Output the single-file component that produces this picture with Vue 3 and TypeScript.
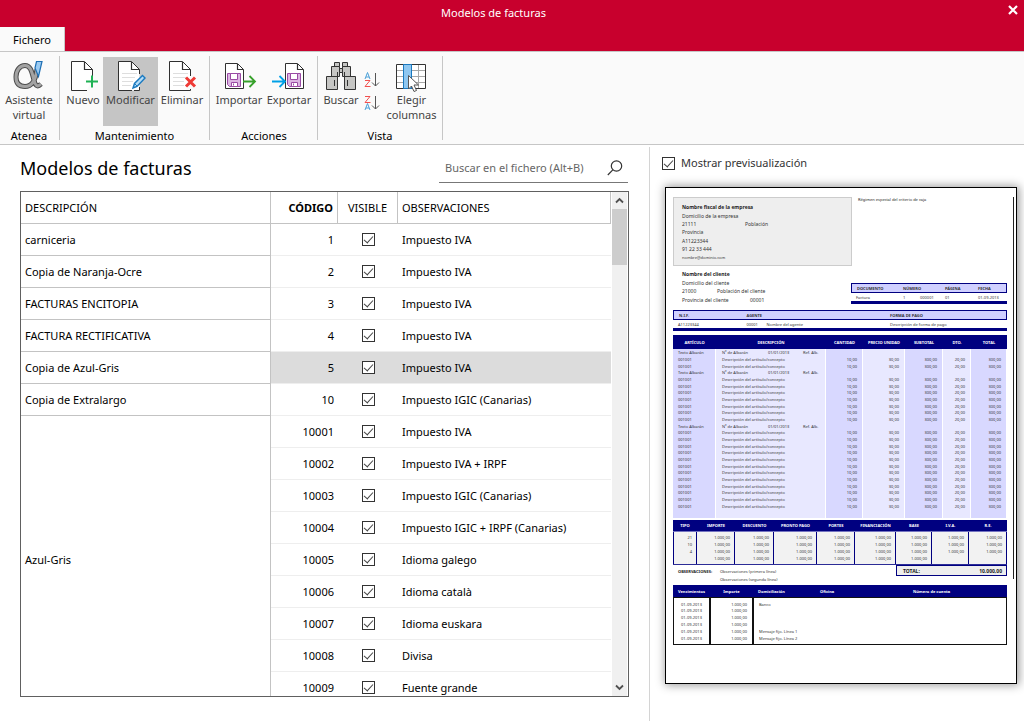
<script setup lang="ts">
import { ref } from 'vue'

interface Model {
  code: number
  notes: string
  name?: string
  span?: number
  visible: boolean
}

const models = ref<Model[]>([
  { name: 'carniceria', code: 1, notes: 'Impuesto IVA', visible: true },
  { name: 'Copia de Naranja-Ocre', code: 2, notes: 'Impuesto IVA', visible: true },
  { name: 'FACTURAS ENCITOPIA', code: 3, notes: 'Impuesto IVA', visible: true },
  { name: 'FACTURA RECTIFICATIVA', code: 4, notes: 'Impuesto IVA', visible: true },
  { name: 'Copia de Azul-Gris', code: 5, notes: 'Impuesto IVA', visible: true },
  { name: 'Copia de Extralargo', code: 10, notes: 'Impuesto IGIC (Canarias)', visible: true },
  { name: 'Azul-Gris', span: 9, code: 10001, notes: 'Impuesto IVA', visible: true },
  { code: 10002, notes: 'Impuesto IVA + IRPF', visible: true },
  { code: 10003, notes: 'Impuesto IGIC (Canarias)', visible: true },
  { code: 10004, notes: 'Impuesto IGIC + IRPF (Canarias)', visible: true },
  { code: 10005, notes: 'Idioma galego', visible: true },
  { code: 10006, notes: 'Idioma català', visible: true },
  { code: 10007, notes: 'Idioma euskara', visible: true },
  { code: 10008, notes: 'Divisa', visible: true },
  { code: 10009, notes: 'Fuente grande', visible: true },
])
const selected = ref(5)
const search = ref('')
const showPreview = ref(true)

const widths = (parts: number[]): string[] => {
  const total = parts.reduce((a, b) => a + b, 0)
  return parts.map((p) => `${(p / total) * 100}%`)
}

const lineCols = widths([43, 110, 37, 42, 38, 28, 36])
const lineHeads = ['ARTÍCULO', 'DESCRIPCIÓN', 'CANTIDAD', 'PRECIO UNIDAD', 'SUBTOTAL', 'DTO.', 'TOTAL']
const lineValues = ['10,00', '30,00', '300,00', '20,00', '300,00']
const lines: boolean[] = [2, 7, 12].flatMap((n) => [true, ...Array<boolean>(n).fill(false)])

const taxCols = widths([24, 38, 39, 43, 38, 41, 36, 37, 38])
const taxHeads = ['TIPO', 'IMPORTE', 'DESCUENTO', 'PRONTO PAGO', 'PORTES', 'FINANCIACIÓN', 'BASE', 'I.V.A.', 'R.E.']
const taxRows = ['21', '10', '4', ''].map((t) => [t, ...taxHeads.slice(1).map((_, i) => (t || i < 6 ? '1.000,00' : ''))])

const dueCols = widths([37, 43, 254])
const dueNotes = ['Banco', '', '', '', 'Mensaje fijo. Línea 1', 'Mensaje fijo. Línea 2']
</script>

<template>
  <div class="window">
    <header class="titlebar">
      <div class="caption">
        <span class="caption-text">Modelos de facturas</span>
        <button class="close" aria-label="Cerrar">
          <svg width="10" height="10" viewBox="0 0 10 10"><path d="M1 1L9 9M9 1L1 9" stroke="#fff" stroke-width="2.2" /></svg>
        </button>
      </div>
      <button class="tab">Fichero</button>
    </header>

    <nav class="ribbon">
      <section class="group">
        <div class="tools">
          <button class="tool w56">
            <svg width="36" height="32" viewBox="0 0 36 32" fill="none">
              <path d="M26 9C25 18 22 26.500 14 26.500C8 26.500 5 23 5 17C5 10 9 5.500 14 5.500C20 5.500 21 13 23 20C24 25 26 28 30 24" stroke="#4c4c4c" stroke-width="5" />
              <path d="M26 9C25 18 22 26.500 14 26.500C8 26.500 5 23 5 17C5 10 9 5.500 14 5.500C20 5.500 21 13 23 20C24 25 26 28 30 24" stroke="#a3a3a3" stroke-width="3" />
              <path d="M25.500 1.500H31L27.500 16.500L24 8Z" fill="#9bcbf2" stroke="#1f6fb4" stroke-width="1.200" />
            </svg>
            <span>Asistente<br />virtual</span>
          </button>
        </div>
        <h2>Atenea</h2>
      </section>

      <section class="group">
        <div class="tools">
          <button class="tool w40">
            <svg width="36" height="32" viewBox="0 0 36 32" fill="none">
              <path d="M22 30.500H6.500V1.500H19.500L27.500 9.500V17" fill="#fff" stroke="#303030" />
              <path d="M19.500 2V9.500H27.500" stroke="#303030" stroke-width="1.200" />
              <path d="M27 15.500V27.500M21 21.500H33" stroke="#1fb254" stroke-width="2" />
            </svg>
            <span>Nuevo</span>
          </button>
          <button class="tool w55 active">
            <svg width="36" height="32" viewBox="0 0 36 32" fill="none">
              <path d="M5.500 30.500V1.500H18.500L26.500 9.500V30.500Z" fill="#fff" />
              <path d="M19 30.500H5.500V1.500H18.500L26.500 9.500V14M26.500 27V30.500H21" stroke="#303030" />
              <path d="M18.500 2V9.500H26.500" stroke="#303030" stroke-width="1.200" />
              <path d="M9 13.500H24M9 17.500H22M9 21.500H20M9 25.500H18" stroke="#dedede" />
              <path d="M20 28L21.500 23.500L29.500 15.500L32 18L24 26.500Z" fill="#b5dcf7" stroke="#1979c0" stroke-width="1.400" />
              <path d="M22 24L24 26" stroke="#1979c0" />
            </svg>
            <span>Modificar</span>
          </button>
          <button class="tool w48">
            <svg width="36" height="32" viewBox="0 0 36 32" fill="none">
              <path d="M22 30.500H5.500V1.500H18.500L26.500 9.500V16" fill="#fff" stroke="#303030" />
              <path d="M26.500 29V30.500H22" stroke="#303030" />
              <path d="M18.500 2V9.500H26.500" stroke="#303030" stroke-width="1.200" />
              <path d="M9 13.500H24M9 17.500H22M9 21.500H20M9 25.500H20" stroke="#dedede" />
              <path d="M22 17.500L31 26.500M31 17.500L22 26.500" stroke="#ee3a35" stroke-width="3" />
            </svg>
            <span>Eliminar</span>
          </button>
        </div>
        <h2>Mantenimiento</h2>
      </section>

      <section class="group wide">
        <div class="tools">
          <button class="tool w50">
            <svg width="36" height="32" viewBox="0 0 36 32" fill="none">
              <path d="M4.500 28.500V3.500H16.500L22.500 9.500V28.500Z" fill="#fff" stroke="#303030" />
              <path d="M16.500 4V9.500H22.500" stroke="#303030" stroke-width="1.200" />
              <path d="M6.500 13.500H19.500V26.500H8.500L6.500 24.500Z" fill="#dcb6e2" stroke="#9a4aa5" />
              <path d="M9.500 13.500H16.500V19.500H9.500Z" fill="#fff" stroke="#9a4aa5" />
              <path d="M10.500 22.500H16.500V26.500H10.500Z" fill="#fff" stroke="#9a4aa5" />
              <path d="M12.500 23.500V25.500" stroke="#9a4aa5" />
              <path d="M22 21.500H33M28.500 16L34 21.500L28.500 27" stroke="#37a12b" stroke-width="1.800" />
            </svg>
            <span>Importar</span>
          </button>
          <button class="tool w50">
            <svg width="36" height="32" viewBox="0 0 36 32" fill="none">
              <path d="M14.500 28.500V3.500H26.500L32.500 9.500V28.500Z" fill="#fff" stroke="#303030" />
              <path d="M26.500 4V9.500H32.500" stroke="#303030" stroke-width="1.200" />
              <path d="M16.500 13.500H29.500V26.500H18.500L16.500 24.500Z" fill="#dcb6e2" stroke="#9a4aa5" />
              <path d="M19.500 13.500H26.500V19.500H19.500Z" fill="#fff" stroke="#9a4aa5" />
              <path d="M20.500 22.500H26.500V26.500H20.500Z" fill="#fff" stroke="#9a4aa5" />
              <path d="M22.500 23.500V25.500" stroke="#9a4aa5" />
              <path d="M1 21.500H13M8.500 16L14 21.500L8.500 27" stroke="#00a0e6" stroke-width="1.800" />
            </svg>
            <span>Exportar</span>
          </button>
        </div>
        <h2>Acciones</h2>
      </section>

      <section class="group">
        <div class="tools">
          <button class="tool w40">
            <svg width="36" height="32" viewBox="0 0 36 32" fill="none">
              <g fill="#c6c6c4" stroke="#333">
                <path d="M11.500 2.500H16.500V6.500H11.500ZM19.500 2.500H24.500V6.500H19.500Z" />
                <path d="M8.500 6.500H16.500V16.500H8.500ZM19.500 6.500H27.500V16.500H19.500Z" />
                <path d="M16.500 8.500H19.500V12.500H16.500Z" />
                <path d="M3.500 16.500H14.500V29.500H3.500ZM21.500 16.500H32.500V29.500H21.500Z" />
                <path d="M14.500 16.500V12M21.500 16.500V12M11.500 20V26M24.500 20V26" />
              </g>
            </svg>
            <span>Buscar</span>
          </button>
          <div class="sorts">
            <button class="sort" aria-label="Orden ascendente">
              <svg width="18" height="18" viewBox="0 0 18 18" fill="none">
                <path d="M2 8L4.500 1.500L7 8M3 6H6" stroke="#4aa0d8" />
                <path d="M2 9.500H7L2 15.500H7.500" stroke="#f2504f" />
                <path d="M12.500 2V15M9 11.500L12.500 15L16 11.500" stroke="#555" />
              </svg>
            </button>
            <button class="sort" aria-label="Orden descendente">
              <svg width="18" height="18" viewBox="0 0 18 18" fill="none">
                <path d="M2 2.500H7L2 8.500H7.500" stroke="#f2504f" />
                <path d="M2 16L4.500 9.500L7 16M3 14H6" stroke="#4aa0d8" />
                <path d="M12.500 2V15M9 11.500L12.500 15L16 11.500" stroke="#555" />
              </svg>
            </button>
          </div>
          <button class="tool w55">
            <svg width="36" height="32" viewBox="0 0 36 32" fill="none">
              <path d="M2.500 4.500H31.500V28.500H2.500Z" fill="#fff" />
              <path d="M3 10.500H31M3 16.500H31M3 22.500H31M17.500 5V28M24.500 5V28" stroke="#a8a8a8" />
              <path d="M2.500 4.500H31.500V28.500H2.500Z" stroke="#333" />
              <path d="M9.500 4.500H17.500V28.500H9.500Z" fill="#8fc7f0" stroke="#1979c0" />
              <path d="M14.500 15.500V29L17.500 26L20 31.500L22.500 30.500L20 25H24.500Z" fill="#fff" stroke="#555" />
            </svg>
            <span>Elegir<br />columnas</span>
          </button>
        </div>
        <h2>Vista</h2>
      </section>
    </nav>

    <div class="body">
      <main class="list">
        <div class="list-head">
          <h1>Modelos de facturas</h1>
          <div class="search">
            <input v-model="search" type="text" placeholder="Buscar en el fichero (Alt+B)" aria-label="Buscar en el fichero" />
            <button class="search-btn" aria-label="Buscar">
              <svg width="16" height="16" viewBox="0 0 16 16" fill="none" stroke="#333" stroke-width="1.200"><circle cx="9.500" cy="6" r="5.200" /><path d="M5.800 9.800L0.800 15" /></svg>
            </button>
          </div>
        </div>

        <div class="grid-box">
          <table class="grid">
            <colgroup><col class="c-name" /><col class="c-code" /><col class="c-vis" /><col /></colgroup>
            <thead>
              <tr><th>DESCRIPCIÓN</th><th class="num strong">CÓDIGO</th><th class="mid">VISIBLE</th><th>OBSERVACIONES</th></tr>
            </thead>
            <tbody>
              <tr v-for="m in models" :key="m.code" :class="{ sel: m.code === selected }" @click="selected = m.code">
                <td v-if="m.name" class="name" :rowspan="m.span ?? 1">{{ m.name }}</td>
                <td class="num">{{ m.code }}</td>
                <td class="mid"><input v-model="m.visible" class="check" type="checkbox" :aria-label="`Visible ${m.code}`" /></td>
                <td>{{ m.notes }}</td>
              </tr>
            </tbody>
          </table>
          <div class="scroll">
            <button class="arrow" aria-label="Subir"><svg width="9" height="7" viewBox="0 0 9 7" fill="none"><path d="M1 5.500L4.500 2L8 5.500" stroke="#505050" stroke-width="1.800" /></svg></button>
            <div class="thumb"></div>
            <button class="arrow" aria-label="Bajar"><svg width="9" height="7" viewBox="0 0 9 7" fill="none"><path d="M1 1.500L4.500 5L8 1.500" stroke="#505050" stroke-width="1.800" /></svg></button>
          </div>
        </div>
      </main>

      <aside class="preview">
        <label class="toggle"><input v-model="showPreview" class="check" type="checkbox" />Mostrar previsualización</label>

        <article v-if="showPreview" class="page">
          <div class="top">
            <div class="company">
              <b>Nombre fiscal de la empresa</b>
              <span>Domicilio de la empresa</span>
              <span class="pair"><i>21111</i>Población</span>
              <span>Provincia</span>
              <span>A11223344</span>
              <span>91 22 33 444</span>
              <span class="small">nombre@dominio.com</span>
            </div>
            <p class="regime">Régimen especial del criterio de caja</p>
          </div>

          <div class="mid-row">
            <div class="client">
              <b>Nombre del cliente</b>
              <span>Domicilio del cliente</span>
              <span class="pair zip"><i>21000</i>Población del cliente</span>
              <span class="pair prov"><i>Provincia del cliente</i>00001</span>
            </div>
            <table class="strip doc">
              <thead><tr><th>DOCUMENTO</th><th>NÚMERO</th><th></th><th>PÁGINA</th><th>FECHA</th></tr></thead>
              <tbody><tr><td>Factura</td><td>1</td><td>000001</td><td>01</td><td>01-09-2013</td></tr></tbody>
            </table>
          </div>

          <table class="strip agent">
            <thead><tr><th>N.I.F.</th><th>AGENTE</th><th></th><th>FORMA DE PAGO</th></tr></thead>
            <tbody><tr><td>A11223344</td><td>00001</td><td>Nombre del agente</td><td>Descripción de forma de pago</td></tr></tbody>
          </table>

          <table class="lines">
            <colgroup><col v-for="(w, i) in lineCols" :key="i" :style="{ width: w }" /></colgroup>
            <thead><tr><th v-for="h in lineHeads" :key="h">{{ h }}</th></tr></thead>
            <tbody>
              <tr v-for="(note, i) in lines" :key="i">
                <template v-if="note">
                  <td>Texto Albarán</td>
                  <td><span class="note"><span>Nº de Albarán</span><span>01/01/2013</span><span>Ref. Alb.</span></span></td>
                  <td v-for="(v, j) in lineValues" :key="j"></td>
                </template>
                <template v-else>
                  <td>001001</td>
                  <td>Descripción del artículo/concepto</td>
                  <td v-for="(v, j) in lineValues" :key="j">{{ v }}</td>
                </template>
              </tr>
            </tbody>
            <tfoot><tr><td v-for="(w, i) in lineCols" :key="i"></td></tr></tfoot>
          </table>

          <table class="tax">
            <colgroup><col v-for="(w, i) in taxCols" :key="i" :style="{ width: w }" /></colgroup>
            <thead><tr><th v-for="h in taxHeads" :key="h">{{ h }}</th></tr></thead>
            <tbody>
              <tr v-for="(r, i) in taxRows" :key="i"><td v-for="(v, j) in r" :key="j">{{ v }}</td></tr>
            </tbody>
          </table>

          <div class="sum">
            <b>OBSERVACIONES:</b>
            <p>Observaciones (primera línea)<br />Observaciones (segunda línea)</p>
            <div class="total"><b>TOTAL:</b><b>10.000,00</b></div>
          </div>

          <table class="due">
            <colgroup><col v-for="(w, i) in dueCols" :key="i" :style="{ width: w }" /></colgroup>
            <thead>
              <tr><th>Vencimientos</th><th>Importe</th><th><span class="bank"><span>Domiciliación</span><span>Oficina</span><span>Número de cuenta</span></span></th></tr>
            </thead>
            <tbody>
              <tr v-for="(n, i) in dueNotes" :key="i"><td>01-09-2013</td><td>1.000,00</td><td>{{ n }}</td></tr>
            </tbody>
          </table>
        </article>
      </aside>
    </div>
  </div>
</template>

<style>
html, body { margin: 0; background: #fff; }
</style>

<style scoped>
* { box-sizing: border-box; }
.window { display: flex; flex-direction: column; height: 100vh; overflow: hidden; background: #fff; color: #000; font: 11px/16px "Noto Sans", "Open Sans", sans-serif; }
button { font: inherit; color: inherit; background: none; border: 0; padding: 0; margin: 0; }
h1, h2, p { margin: 0; font-weight: 400; }

.titlebar { background: #c8002d; height: 51px; flex: none; display: flex; flex-direction: column; justify-content: space-between; align-items: flex-start; }
.caption { display: flex; align-self: stretch; height: 26px; color: #fff; }
.caption-text { flex: 1; text-align: center; line-height: 26px; }
.close { width: 37px; height: 19px; padding-right: 6px; display: flex; align-items: center; justify-content: flex-end; }
.tab { width: 65px; height: 24px; padding-top: 2px; background: #fafafa; border-right: 1px solid #c8c8c8; }

.ribbon { flex: none; display: flex; height: 94px; padding-top: 4px; background: #fafafa; border-top: 1px solid #c6c6c6; border-bottom: 1px solid #c6c6c6; }
.group { display: flex; flex-direction: column; height: 84px; padding: 1px 3px 0; border-right: 1px solid #c6c6c6; }
.group.wide { padding: 1px 3px 0 4px; }
.group:first-child { padding: 1px 2px 0 1px; }
.tools { display: flex; flex: none; height: 72px; }
.tool { height: 69px; padding-top: 3px; display: flex; flex-direction: column; align-items: center; color: #444; line-height: 15px; }
.tool svg { flex: none; }
.tool span { white-space: nowrap; }
.tool.active { background: #c5c5c5; }
.w40 { width: 40px; }
.w48 { width: 48px; }
.w50 { width: 50px; }
.w55 { width: 55px; }
.w56 { width: 56px; }
.group h2 { font-size: 11px; line-height: 14px; text-align: center; }
.sorts { width: 23px; padding: 14px 0 0 2px; display: flex; flex-direction: column; gap: 5px; }
.sort { height: 18px; display: flex; }

.body { flex: 1; min-height: 0; display: flex; }
.list { flex: 1; min-width: 0; display: flex; flex-direction: column; padding: 10px 20px 24px; }
.list-head { display: flex; justify-content: space-between; height: 28px; }
h1 { font-size: 18px; line-height: 26px; }
.search { width: 189px; height: 28px; margin-right: 1px; padding-bottom: 2px; display: flex; align-items: center; border-bottom: 1px solid #777; }
.search input { flex: 1; min-width: 0; border: 0; outline: 0; padding: 0 0 0 6px; background: none; color: #000; font: inherit; }
.search input::placeholder { color: #666; opacity: 1; }
.search-btn { width: 26px; height: 16px; text-align: center; }

.grid-box { flex: 1; min-height: 0; margin-top: 8px; display: flex; border: 1px solid #606060; overflow: hidden; }
.grid { flex: 1; height: 0; border-collapse: separate; border-spacing: 0; table-layout: fixed; }
.c-name { width: 250px; }
.c-code { width: 67px; }
.c-vis { width: 60px; }
.grid th, .grid td { height: 32px; padding: 0 4px; text-align: left; font-weight: 400; white-space: nowrap; }
.grid th { border-right: 1px solid #c3c3c3; border-bottom: 1px solid #c3c3c3; }
.grid td { border-bottom: 1px solid #eee; }
.grid td.name { border-right: 1px solid #c3c3c3; border-bottom: 1px solid #c3c3c3; background: #fff; }
.grid th.strong { font-weight: 700; }
.grid .num { text-align: right; }
.grid .mid { text-align: center; }
.grid .sel td:not(.name) { background: #dcdcdc; }
.check { appearance: none; width: 13px; height: 13px; margin: 0; display: inline-block; border: 1px solid #333; background: #fff; }
.grid .check { display: block; margin: 0 auto; }
.check:checked::before { content: ""; display: block; width: 8px; height: 4px; margin: 2px 1px; border: solid #444; border-width: 0 0 1px 1px; transform: rotate(-48deg); }
.scroll { width: 17px; padding: 0 1px; display: flex; flex-direction: column; align-items: stretch; }
.arrow { height: 17px; background: #f0f0f0; display: flex; align-items: center; justify-content: center; }
.thumb { flex: 1; background: linear-gradient(#cdcdcd, #cdcdcd) top / 100% 56px no-repeat #f0f0f0; }

.preview { width: 375px; margin-top: 2px; padding: 7px 7px 0 15px; border-left: 1px solid #d4d4d4; }
.toggle { display: flex; align-items: center; gap: 6px; margin-left: -3px; line-height: 18px; color: #333; }

.page { position: relative; height: 497px; margin-top: 15px; padding: 9px 9px 0 7px; border: 1px solid #000; background: #fff; box-shadow: 1px 0 9px 1px #999; font: 5px/6px "Noto Sans", "Open Sans", sans-serif; color: #333; }
.page::after { content: ""; position: absolute; top: 9px; right: 2px; width: 1px; height: 382px; background: #222; }
.page b { color: #222; }
.top { display: flex; height: 69px; }
.company { width: 179px; padding: 5px 8px 3px; display: grid; grid-auto-rows: 1fr; align-items: center; border: 1px solid #ccc; background: #eee; }
.company b, .client b { font-family: "Open Sans", sans-serif; }
.pair { display: flex; }
.pair i { font-style: normal; width: 63px; }
.pair.zip i { width: 35px; }
.pair.prov i { width: 68px; }
.small, .regime { font-size: 4px; }
.regime { padding-left: 6px; color: #222; }
.mid-row { display: flex; justify-content: space-between; align-items: flex-end; height: 38px; padding-top: 4px; }
.client { height: 34px; padding-left: 9px; display: grid; grid-auto-rows: 1fr; align-items: center; }
table { border-spacing: 0; table-layout: fixed; }
.page table { width: 100%; font-size: 4px; line-height: 5px; }
.page th, .page td { padding: 0; text-align: left; white-space: nowrap; }
.strip { border-bottom: 3px solid #000080; }
.strip th { height: 10px; background: #d0d0ff; border: solid #000080; border-width: 1px 0; color: #333; }
.strip td { height: 8px; }
.strip th:first-child { border-left-width: 1px; }
.strip th:last-child { border-right-width: 1px; }
.strip tr > :first-child { padding-left: 5px; }
.page .strip.doc { width: 156px; }
.doc th:nth-child(1) { width: 52px; }
.doc th:nth-child(2) { width: 17px; }
.doc th:nth-child(3) { width: 25px; }
.doc th:nth-child(4) { width: 33px; }
.page .strip.agent { margin-top: 6px; }
.agent th:nth-child(1) { width: 22%; }
.agent th:nth-child(2) { width: 6%; }
.agent th:nth-child(3) { width: 37%; }
.agent td { height: 8px; }
.page .lines { margin-top: 4px; }
.page .lines th { height: 14px; text-align: center; }
.lines th, .tax th, .due th { background: #000080; color: #fff; }
.page .lines td { height: 6px; padding-right: 5px; text-align: right; background: #d8d8ff; border-right: 1px solid #fff; }
.page .lines tbody tr:nth-child(3n + 1) td { height: 7px; }
.page .lines tbody tr:nth-child(3n + 2) td { height: 7px; }
.page .lines td:nth-child(even) { background: #e8e8ff; }
.page .lines td:nth-child(1) { padding-left: 5px; text-align: left; }
.page .lines td:nth-child(2) { padding-left: 6px; text-align: left; }
.page .lines tfoot td { height: 9px; }
.note { display: grid; grid-template-columns: 46px 35px 1fr; }
.page .tax { margin-top: 2px; border: solid #2c2c96; border-width: 0 0 1px; }
.page .tax th { height: 12px; text-align: center; border-bottom: 1px solid #7474c0; }
.page .tax td { height: 7px; padding-right: 4px; text-align: right; background: #f2f2f2; border-right: 1px solid #000080; }
.page .tax td:first-child { border-left: 1px solid #000080; }
.page .tax tbody tr:first-child td { height: 9px; padding-top: 2px; }
.page .tax tbody tr:last-child td { height: 9px; padding-bottom: 2px; }
.sum { display: flex; height: 20px; padding-left: 5px; font-size: 4px; line-height: 8px; }
.sum > b { width: 42px; padding-top: 3px; }
.sum p { flex: 1; padding-top: 3px; }
.total { width: 111px; height: 11px; padding: 0 4px 0 6px; display: flex; justify-content: space-between; align-items: center; border: 1px solid #000080; background: #eee; font-size: 5px; }
.page .due th { height: 12px; text-align: center; }
.page .due th:last-child { padding-left: 5px; }
.bank { display: grid; grid-template-columns: 62px 93px 1fr; text-align: left; }
.page .due td { height: 7px; padding: 0 5px; border: solid #111; border-width: 0 1px; }
.page .due td:first-child { text-align: center; }
.page .due td:nth-child(2) { text-align: right; }
.page .due tbody tr:first-child td { height: 10px; padding-top: 3px; border-top-width: 1px; }
.page .due tbody tr:last-child td { height: 10px; padding-bottom: 3px; border-bottom-width: 1px; }
</style>
